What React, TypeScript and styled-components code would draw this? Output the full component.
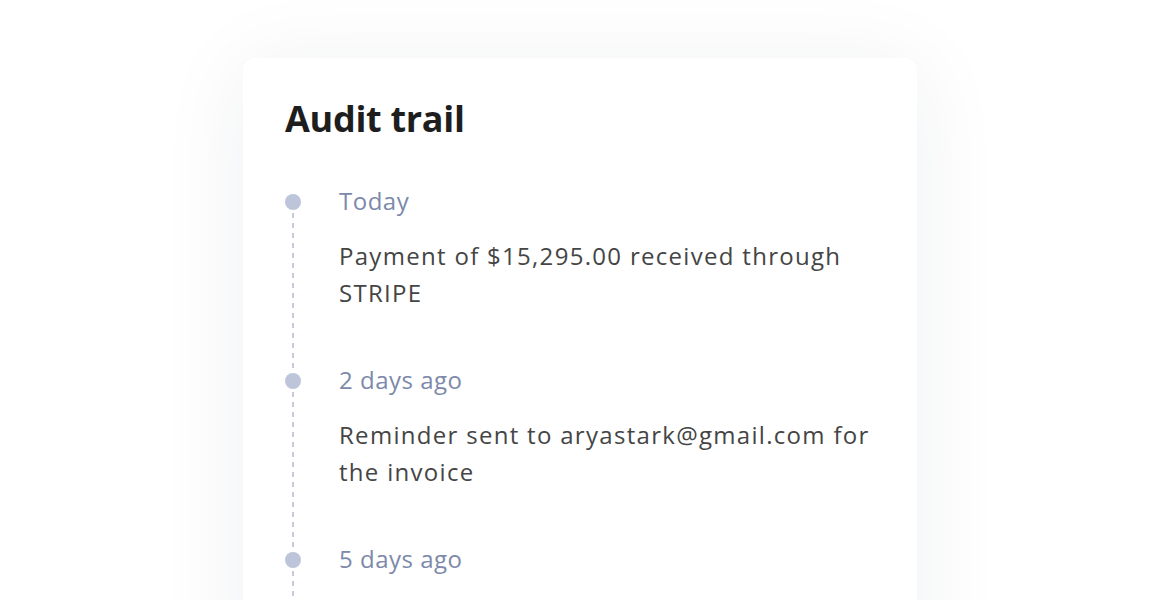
import styled, { createGlobalStyle } from 'styled-components'

const GlobalStyle = createGlobalStyle`
    html, body {
        margin: 0;
        padding: 0;
        background: #ffffff;
    }
    body {
        font-family: "Open Sans", Lato, sans-serif;
        -webkit-font-smoothing: antialiased;
    }
`

const Page = styled.div`
    display: flex;
    justify-content: center;
    padding-top: 58px;
    height: 600px;
    box-sizing: border-box;
    overflow: hidden;
`

const Card = styled.section`
    width: 674px;
    box-sizing: border-box;
    padding: 39px 42px 40px 42px;
    background: #ffffff;
    border-radius: 12px;
    box-shadow: 0 10px 90px rgba(30, 40, 70, 0.07);
    align-self: flex-start;
`

const Title = styled.h2`
    margin: 0 0 41px 0;
    font-size: 36px;
    line-height: 44px;
    font-weight: 700;
    color: #1e1e1e;
    letter-spacing: -0.3px;
`

const Timeline = styled.ol`
    list-style: none;
    margin: 0;
    padding: 0;
`

const Item = styled.li`
    display: grid;
    grid-template-columns: 16px 1fr;
    column-gap: 38px;
`

const Marker = styled.div`
    display: flex;
    flex-direction: column;
    align-items: center;
    padding-top: 12px;
`

const Dot = styled.span`
    width: 16px;
    height: 16px;
    border-radius: 50%;
    background: #bdc5da;
    flex: none;
`

const Connector = styled.span<{ $last?: boolean }>`
    flex: 1;
    width: 2px;
    margin-bottom: ${p => (p.$last ? '0' : '-12px')};
    background-image: linear-gradient(to bottom, #c6cbdc 55%, transparent 55%);
    background-size: 2px 10px;
    background-position: 0 3px;
`

const Content = styled.div`
    padding-bottom: 50px;
`

const When = styled.div`
    font-size: 24px;
    line-height: 37px;
    letter-spacing: 0.5px;
    color: #7d89aa;
    margin-bottom: 18px;
`

const What = styled.p`
    margin: 0;
    font-size: 24px;
    line-height: 37px;
    letter-spacing: 1.3px;
    color: #454545;
`

// last entry's text falls below the visible fold, only its date shows
const events: { when: string; what?: string }[] = [
    { when: 'Today', what: 'Payment of $15,295.00 received through STRIPE' },
    { when: '2 days ago', what: 'Reminder sent to aryastark@gmail.com for the invoice' },
    { when: '5 days ago' },
]

export default function App() {
    return (
        <>
        <GlobalStyle />
        <Page>
            <Card>
                <Title>Audit trail</Title>
                <Timeline>
                    {events.map((e, i) =>
                        <Item key={e.when}>
                            <Marker>
                                <Dot />
                                <Connector $last={i === events.length - 1} />
                            </Marker>
                            <Content>
                                <When>{e.when}</When>
                                {e.what && <What>{e.what}</What>}
                            </Content>
                        </Item>
                    )}
                </Timeline>
            </Card>
        </Page>
        </>
    )
}
